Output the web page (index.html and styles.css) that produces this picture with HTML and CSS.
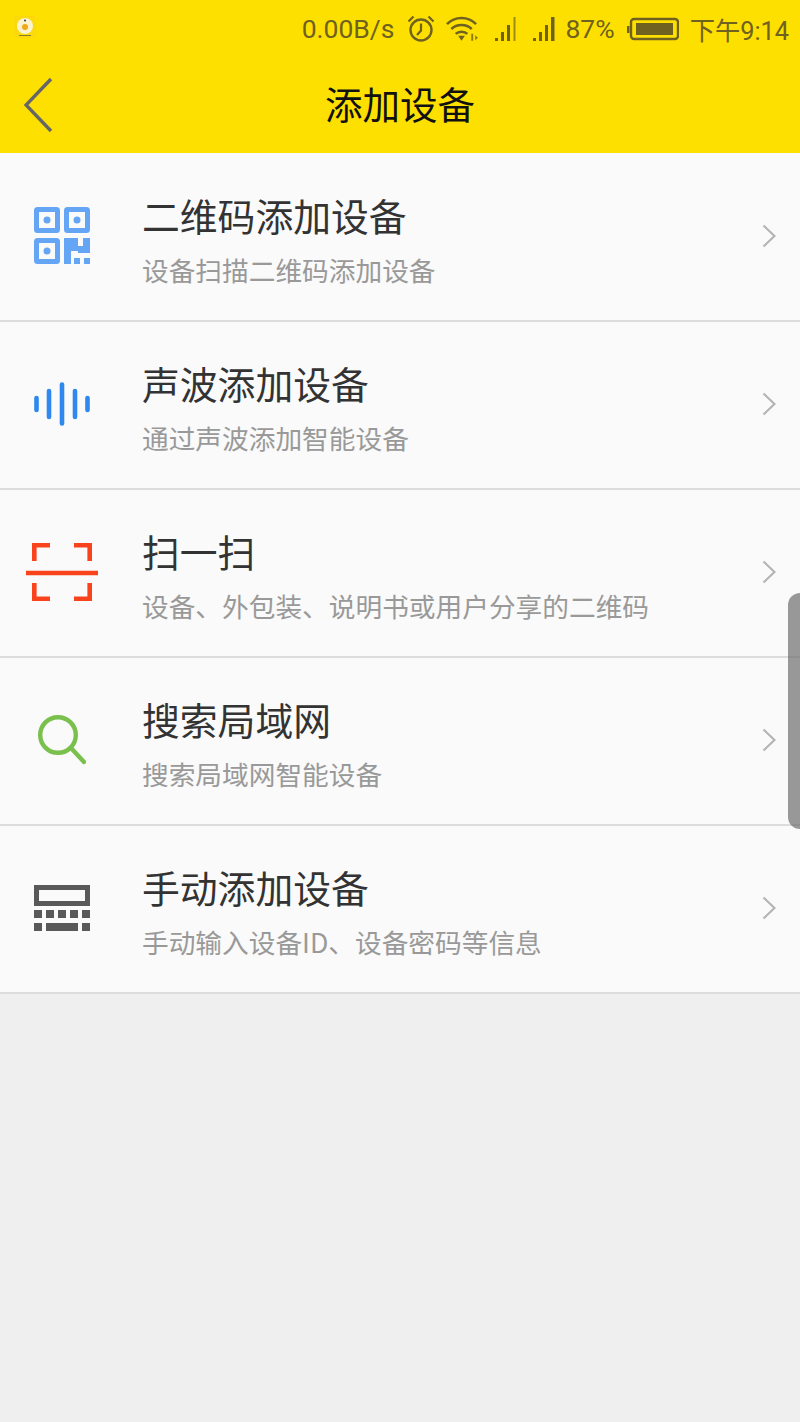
FILE: index.html
```html
<!DOCTYPE html>
<html lang="zh-CN">
<head>
<meta charset="utf-8">
<title>添加设备</title>
<link rel="stylesheet" href="styles.css">
</head>
<body>
<div class="screen">
  <header class="top">
    <div class="status">
      <svg class="app-icon" viewBox="0 0 24 24"><rect x="1" y="1" width="22" height="22" rx="3" fill="#fbd90c"/><circle cx="12" cy="11" r="8" fill="#fbf3d0"/><circle cx="12" cy="12" r="3" fill="#f0a818"/><circle cx="12" cy="5.500" r="1" fill="#335"/><rect x="6" y="20" width="12" height="1" fill="#8a7a30"/></svg>
      <div class="status-right">
        <span class="net">0.00B/s</span>
        <svg class="ic-alarm" viewBox="0 0 28 28"><circle cx="14" cy="15" r="10.500" fill="none" stroke="#6f6120" stroke-width="2.400"/><path d="M14 8.500V15.500L10 20M1.500 6.500L6.500 1.500M26.500 6.500L21.500 1.500" fill="none" stroke="#6f6120" stroke-width="2.200"/></svg>
        <svg class="ic-wifi" viewBox="0 0 34 26"><path d="M1 8C9-.5 23-.5 31 8M5.500 13C11 7.500 21 7.500 26.500 13M10 18C13 15 19 15 22 18" fill="none" stroke="#6f6120" stroke-width="2.600"/><path d="M12.500 20H19.500L16 25Z" fill="#6f6120"/><path d="M26 18h2v7h-2zM30 19.500l3 2.500-3 2.500z" fill="#8c7d18"/></svg>
        <svg class="ic-sig" viewBox="0 0 24 26"><path d="M1 22h3v3H1zM7 16h3v9H7zM13 9h3v16h-3z" fill="#6f6120"/><path d="M19.500 1h2v24h-2z" fill="#9c8c14"/></svg>
        <svg class="ic-sig" viewBox="0 0 24 26"><path d="M1 22h3v3H1zM7 16h3v9H7zM13 9h3v16h-3zM19 1h3.500v24H19z" fill="#6f6120"/></svg>
        <span class="pct">87%</span>
        <svg class="ic-batt" viewBox="0 0 52 24"><path d="M0 9h2.500v7H0z" fill="#6f6120"/><rect x="4" y="2" width="47" height="20" rx="3" fill="none" stroke="#6f6120" stroke-width="2.400"/><rect x="9" y="6" width="37" height="12" fill="#6f6120"/></svg>
        <span class="time">下午9:14</span>
      </div>
    </div>
    <div class="nav">
      <svg class="back" viewBox="0 0 30 56"><path d="M27 2L2 28L27 54" fill="none" stroke="#666" stroke-width="3.400"/></svg>
      <h1 class="title">添加设备</h1>
    </div>
  </header>

  <ul class="list">
    <li class="row">
      <span class="icon">
        <svg viewBox="0 0 56 58" class="ic-qr"><g fill="none" stroke="#64a5f5" stroke-width="5"><rect x="2.500" y="2.500" width="21" height="21" rx="1"/><rect x="32.500" y="2.500" width="21" height="21" rx="1"/><rect x="2.500" y="33.500" width="21" height="21" rx="1"/></g><g fill="#64a5f5"><circle cx="13" cy="13" r="3.500"/><circle cx="43" cy="13" r="3.500"/><circle cx="13" cy="44" r="3.500"/><path d="M30 31h14v8h5v-8h7v15H44v-2h-7v13h-7z"/><rect x="40" y="51" width="6" height="6"/><rect x="50" y="51" width="6" height="6"/></g></svg>
      </span>
      <div class="text"><div class="name">二维码添加设备</div><div class="desc">设备扫描二维码添加设备</div></div>
      <svg class="chev" viewBox="0 0 14 24"><path d="M1.500 1.500L12.500 12L1.500 22.500" fill="none" stroke="#b4b4b4" stroke-width="2.200"/></svg>
    </li>
    <li class="row">
      <span class="icon">
        <svg viewBox="0 0 56 44" class="ic-wave"><g stroke="#2f88f0" stroke-width="4.600" stroke-linecap="round"><path d="M2.500 16V28M15 9V35M28 2.500V41.500M41 9V35M53.500 16V28"/></g></svg>
      </span>
      <div class="text"><div class="name">声波添加设备</div><div class="desc">通过声波添加智能设备</div></div>
      <svg class="chev" viewBox="0 0 14 24"><path d="M1.500 1.500L12.500 12L1.500 22.500" fill="none" stroke="#b4b4b4" stroke-width="2.200"/></svg>
    </li>
    <li class="row">
      <span class="icon">
        <svg viewBox="0 0 72 58" class="ic-scan"><g fill="none" stroke="#f8431c" stroke-width="4.600"><path d="M24 2.300H8.300V18M48 2.300H63.700V18M8.300 40V55.700H24M63.700 40V55.700H48"/><path d="M0 30H72"/></g></svg>
      </span>
      <div class="text"><div class="name">扫一扫</div><div class="desc">设备、外包装、说明书或用户分享的二维码</div></div>
      <svg class="chev" viewBox="0 0 14 24"><path d="M1.500 1.500L12.500 12L1.500 22.500" fill="none" stroke="#b4b4b4" stroke-width="2.200"/></svg>
    </li>
    <li class="row">
      <span class="icon">
        <svg viewBox="0 0 48 50" class="ic-search"><circle cx="20" cy="20" r="17.800" fill="none" stroke="#79c04c" stroke-width="4.400"/><path d="M33 33L46 47" fill="none" stroke="#79c04c" stroke-width="4.400" stroke-linecap="round"/></svg>
      </span>
      <div class="text"><div class="name">搜索局域网</div><div class="desc">搜索局域网智能设备</div></div>
      <svg class="chev" viewBox="0 0 14 24"><path d="M1.500 1.500L12.500 12L1.500 22.500" fill="none" stroke="#b4b4b4" stroke-width="2.200"/></svg>
    </li>
    <li class="row">
      <span class="icon">
        <svg viewBox="0 0 56 46" class="ic-keys"><rect x="2.500" y="2.500" width="51" height="16" fill="none" stroke="#595959" stroke-width="5"/><g fill="#595959"><rect x="0" y="25" width="8" height="8"/><rect x="12" y="25" width="8" height="8"/><rect x="24" y="25" width="8" height="8"/><rect x="36" y="25" width="8" height="8"/><rect x="48" y="25" width="8" height="8"/><rect x="0" y="38" width="8" height="8"/><rect x="12" y="38" width="32" height="8"/><rect x="48" y="38" width="8" height="8"/></g></svg>
      </span>
      <div class="text"><div class="name">手动添加设备</div><div class="desc">手动输入设备ID、设备密码等信息</div></div>
      <svg class="chev" viewBox="0 0 14 24"><path d="M1.500 1.500L12.500 12L1.500 22.500" fill="none" stroke="#b4b4b4" stroke-width="2.200"/></svg>
    </li>
  </ul>

  <div class="edge-handle"></div>
</div>
</body>
</html>
```
FILE: styles.css
```css
* { box-sizing: border-box; }
html, body { margin: 0; padding: 0; }
body {
  background: #efefef;
  font-family: "Noto Sans CJK SC", "Noto Sans", sans-serif;
}
.screen {
  position: relative;
  width: 800px;
  height: 1422px;
  overflow: hidden;
  background: #efefef;
}
.top { background: #fee000; height: 153px; }
.status {
  height: 57px;
  display: flex;
  align-items: center;
  justify-content: space-between;
  padding: 0 11px 0 13px;
  color: #6f6120;
  font-family: Roboto, "Noto Sans CJK SC", sans-serif;
  font-size: 26px;
}
.app-icon { width: 24px; height: 24px; margin-top: -4px; }
.status-right { display: flex; align-items: center; }
.net { margin-right: 13px; font-size: 26.500px; }
.ic-alarm { width: 28px; height: 28px; margin-right: 11px; }
.ic-wifi { width: 33px; height: 26px; margin-right: 15px; }
.ic-sig { width: 24px; height: 26px; margin-right: 14px; }
.ic-sig + .ic-sig { margin-right: 9px; }
.pct { margin-right: 12px; font-size: 26.500px; }
.ic-batt { width: 52px; height: 24px; margin-right: 11px; }
.time { font-size: 25.300px; }
.nav {
  height: 96px;
  position: relative;
  display: flex;
  align-items: center;
  justify-content: center;
}
.back {
  position: absolute;
  left: 24px;
  top: 20px;
  width: 30px;
  height: 56px;
}
.title {
  margin: 0;
  font-size: 37.500px;
  font-weight: 400;
  color: #111;
  line-height: 1;
  padding-bottom: 4px;
}
.list { list-style: none; margin: 0; padding: 1px 0 0; background: #fafafa; }
.row {
  height: 168px;
  display: flex;
  align-items: center;
  background: #fafafa;
  border-bottom: 2px solid #dcdcdc;
  padding: 0 24px 2px 0;
}
.icon {
  width: 142px;
  flex: none;
  display: flex;
  justify-content: flex-start;
  padding-left: 34px;
}
.icon svg { display: block; }
.ic-qr { width: 56px; height: 58px; }
.ic-wave { width: 56px; height: 44px; }
.ic-scan { width: 72px; height: 58px; margin-left: -8px; }
.ic-search { width: 48px; height: 50px; margin-left: 4px; }
.ic-keys { width: 56px; height: 46px; }
.text { flex: 1; min-width: 0; padding-top: 5px; }
.name {
  font-size: 37.800px;
  line-height: 50px;
  color: #333;
}
.desc {
  font-size: 26.700px;
  line-height: 36px;
  margin-top: 12px;
  color: #999;
}
.chev { width: 14px; height: 24px; flex: none; }
.edge-handle {
  position: absolute;
  right: 0;
  top: 593px;
  width: 12px;
  height: 236px;
  background: rgba(110, 110, 110, 0.7);
  border-radius: 16px 0 0 16px;
}
```
